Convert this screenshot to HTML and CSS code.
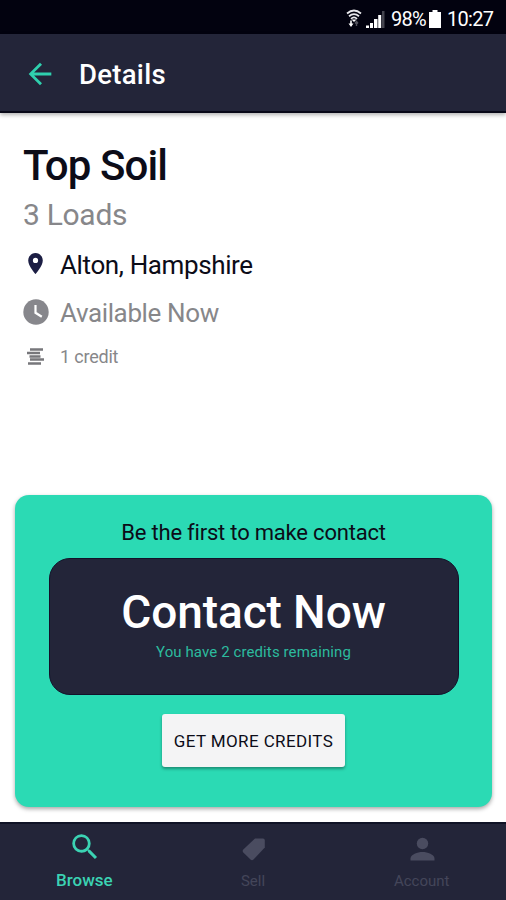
FILE: index.html
```html
<!DOCTYPE html>
<html lang="en">
<head>
  <meta charset="UTF-8" />
  <meta name="viewport" content="width=device-width, initial-scale=1.0" />
  <title>Details</title>
  <link rel="stylesheet" href="styles.css">
</head>
<body>

  <div class="status-bar">
    <svg class="wifi" width="16" height="19" viewBox="0 0 16 19">
      <g fill="none" stroke="#e8e8ec" stroke-width="1.8">
        <path d="M1 4.500 Q8 -1.500 15 4.500" />
        <path d="M3 7.200 Q8 3 13 7.200" />
        <path d="M5 9.800 Q8 7 11 9.800" />
      </g>
      <path d="M5.500 10.500h5l-2.500 2.500z" fill="#fff" />
      <path d="M2.500 14.500h5l-2.500 3.500zM4.200 11.500h1.600v4h-1.600z" fill="#fff" />
      <path d="M10.500 17v-4M9 14.500l1.500-2 1.500 2" fill="none" stroke="#55555f" stroke-width="1.400" />
    </svg>
    <svg class="signal" width="19" height="18" viewBox="0 0 19 18">
      <path d="M0 15.500h3v2.500H0zM4 13h3v5H4zM8 9h3.500v9H8zM12.200 5h3v13h-3z" fill="#fff" />
      <path d="M16 1h2.500v17H16z" fill="#45454f" />
    </svg>
    <span class="percent">98%</span>
    <svg class="battery" width="12" height="18" viewBox="0 0 12 18">
      <path d="M3.500 0h5v2H12v16H0V2h3.500z" fill="#fff" />
    </svg>
    <span class="time">10:27</span>
  </div>

  <header class="header">
    <svg class="back" width="34" height="34" viewBox="0 0 24 24" fill="#2fd0ae">
      <path d="M20 11H7.830l5.590-5.590L12 4l-8 8 8 8 1.410-1.410L7.830 13H20v-2z" />
    </svg>
    <h1>Details</h1>
  </header>

  <main class="content">
    <h2>Top Soil</h2>
    <p class="loads">3 Loads</p>
    <ul class="info">
      <li class="location">
        <svg width="25" height="25" viewBox="0 0 24 24" fill="#1c1e44">
          <path d="M12 2C8.130 2 5 5.130 5 9c0 5.250 7 13 7 13s7-7.750 7-13c0-3.870-3.130-7-7-7zm0 9.500a2.500 2.500 0 0 1 0-5 2.500 2.500 0 0 1 0 5z" />
        </svg>
        <span>Alton, Hampshire</span>
      </li>
      <li class="available">
        <svg width="26" height="26" viewBox="0 0 26 26">
          <circle cx="13" cy="13" r="12.700" fill="#87878c" />
          <path d="M12.500 6v7.800l6.300 4" fill="none" stroke="#fff" stroke-width="2.200" />
        </svg>
        <span>Available Now</span>
      </li>
      <li class="credit">
        <svg width="17" height="17" viewBox="0 0 17 17">
          <path d="M3 1.500h13M0 5h13M2.500 8.500h11M3 11.500h14M1 15.500h13" fill="none" stroke="#77777b" stroke-width="2.300" />
        </svg>
        <span>1 credit</span>
      </li>
    </ul>
  </main>

  <section class="contact-card">
    <p>Be the first to make contact</p>
    <button class="contact">
      <strong>Contact Now</strong>
      <small>You have 2 credits remaining</small>
    </button>
    <button class="more">GET MORE CREDITS</button>
  </section>

  <nav class="tabs">
    <a class="tab active">
      <svg width="34" height="34" viewBox="0 0 24 24">
        <path d="M15.500 14h-.790l-.280-.270A6.471 6.471 0 0 0 16 9.500 6.500 6.500 0 1 0 9.500 16c1.610 0 3.090-.590 4.230-1.570l.270.280v.790l5 4.990L20.490 19l-4.990-5zm-6 0C7.010 14 5 11.990 5 9.500S7.010 5 9.500 5 14 7.010 14 9.500 11.990 14 9.500 14z" />
      </svg>
      <span>Browse</span>
    </a>
    <a class="tab">
      <svg width="34" height="34" viewBox="0 0 34 34">
        <path d="M19 8.500h8q1.800 0 1.800 2v7L17.500 29.500Q16 30.800 14.500 29.500L7.300 22.500Q6 21 7.300 19.500z" />
      </svg>
      <span>Sell</span>
    </a>
    <a class="tab">
      <svg width="34" height="34" viewBox="0 0 34 34">
        <circle cx="17.500" cy="13.500" r="5.700" />
        <path d="M5.500 30.500v-2c0-4 7-6.500 12-6.500s12 2.500 12 6.500v2z" />
      </svg>
      <span>Account</span>
    </a>
  </nav>

</body>
</html>
```
FILE: styles.css
```css
* {
  box-sizing: border-box;
}

body {
  margin: 0;
  height: 900px;
  display: flex;
  flex-direction: column;
  font-family: Roboto, "Liberation Sans", sans-serif;
  background-color: #fff;
  color: #0c0c18;
  overflow: hidden;
}

h1, h2, p, ul {
  margin: 0;
  padding: 0;
  font-weight: 400;
}

svg {
  display: block;
  flex: none;
}

button {
  font-family: inherit;
  border: none;
}

.status-bar {
  height: 34px;
  padding: 3px 12px 0 0;
  display: flex;
  align-items: center;
  justify-content: flex-end;
  background-color: #02020f;
  color: #fff;
  font-size: 20px;
  letter-spacing: -0.7px;
  white-space: nowrap;
}

.signal {
  margin-left: 4px;
}

.percent {
  width: 34px;
  margin-left: 6px;
}

.battery {
  margin-left: 4px;
}

.time {
  width: 47px;
  margin-left: 6px;
}

.header {
  height: 79px;
  padding-left: 23px;
  display: flex;
  align-items: center;
  background-color: #232539;
  border-bottom: 2px solid #080818;
  box-shadow: 0 2px 4px rgba(0, 0, 0, 0.3);
  color: #fff;
}

.back {
  margin-top: 2px;
}

.header h1 {
  margin: 4px 0 0 22px;
  font-size: 27.5px;
  line-height: 32px;
  font-weight: 500;
  letter-spacing: 0.3px;
}

.content {
  height: 382px;
  padding: 28px 24px 0 23px;
}

.content h2 {
  font-size: 42px;
  line-height: 50px;
  font-weight: 500;
  letter-spacing: -0.9px;
}

.loads {
  margin-top: 6px;
  font-size: 30px;
  line-height: 36px;
  letter-spacing: -0.3px;
  color: #87878a;
}

.info {
  list-style: none;
}

.info li {
  display: grid;
  grid-template-columns: 25px 1fr;
  column-gap: 12px;
  justify-items: center;
  align-items: center;
  height: 48px;
  font-size: 26px;
  letter-spacing: -0.38px;
}

.info span {
  justify-self: start;
}

.info .location {
  margin-top: 8px;
}

.info .location svg {
  margin-top: -3px;
}

.info .available {
  color: #87878a;
}

.info .available svg {
  margin-top: -2px;
}

.info .credit {
  height: 38px;
  font-size: 18px;
  letter-spacing: -0.2px;
  color: #87878a;
}

.contact-card {
  height: 312px;
  margin: 0 14px 15px 15px;
  padding-top: 24px;
  display: flex;
  flex-direction: column;
  align-items: center;
  background-color: #2bdab4;
  border-radius: 14px;
  box-shadow: 0 2px 4px rgba(0, 0, 0, 0.35);
}

.contact-card p {
  font-size: 22px;
  line-height: 28px;
  letter-spacing: -0.2px;
}

.contact {
  width: 410px;
  height: 137px;
  margin-top: 11px;
  padding: 0;
  display: flex;
  flex-direction: column;
  align-items: center;
  background-color: #232539;
  border: 1px solid #12122a;
  border-radius: 21px;
}

.contact strong {
  margin-top: 25px;
  font-size: 46px;
  line-height: 56px;
  font-weight: 500;
  letter-spacing: -0.1px;
  color: #fff;
}

.contact small {
  margin-top: 1px;
  font-size: 15px;
  line-height: 22px;
  letter-spacing: 0.1px;
  color: #2cbb9e;
}

.more {
  width: 183px;
  height: 53px;
  margin-top: 19px;
  padding: 0;
  background-color: #f4f4f5;
  border-radius: 3px;
  box-shadow: 0 2px 3px rgba(0, 0, 0, 0.35);
  font-size: 17px;
  letter-spacing: 0.4px;
  color: #0c0c18;
}

.tabs {
  height: 78px;
  display: flex;
  background-color: #232539;
  border-top: 2px solid #101326;
}

.tab {
  flex: 1;
  display: flex;
  flex-direction: column;
  align-items: center;
  padding-top: 6px;
  font-size: 15px;
  line-height: 20px;
  color: #44465a;
}

.tab svg {
  fill: #4a4c60;
}

.tab span {
  margin-top: 7px;
}

.tab.active {
  font-size: 17px;
  color: #3bd3b3;
}

.tab.active svg {
  margin-left: 2px;
  fill: #3bd3b3;
}

.tab.active span {
  margin-top: 6px;
  font-weight: 500;
}
```
